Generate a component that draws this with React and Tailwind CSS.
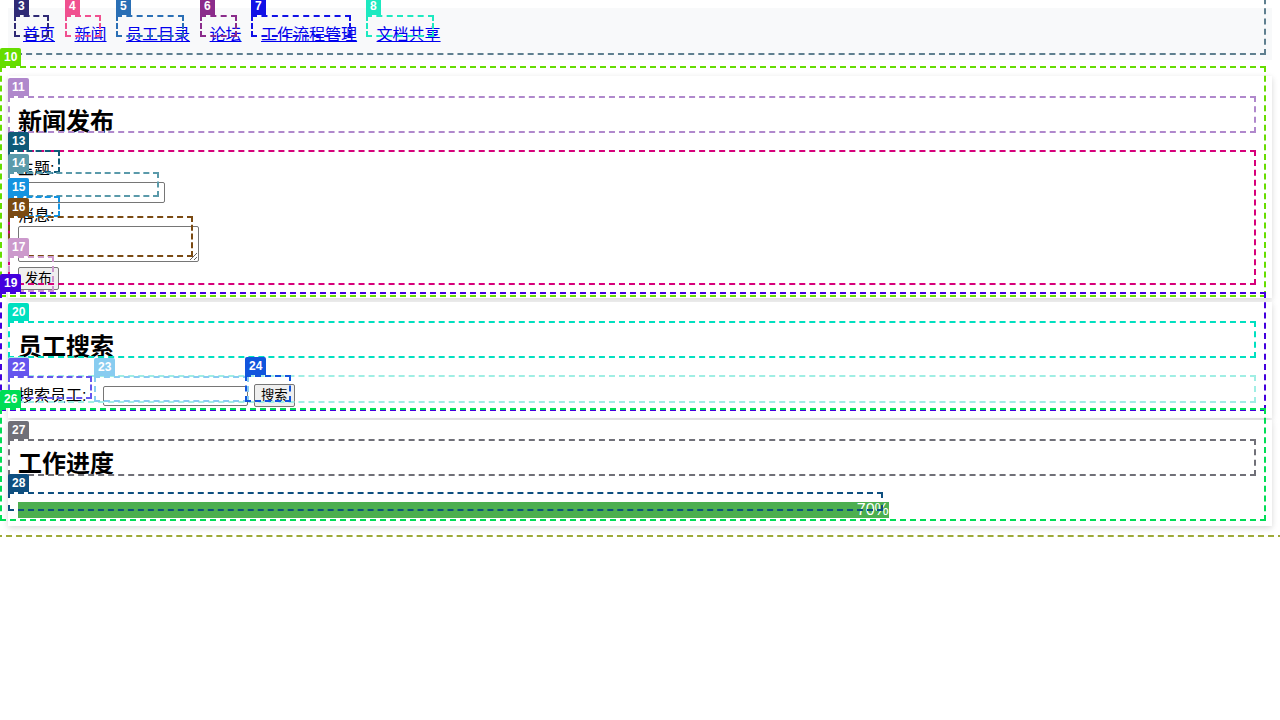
import React from 'react';

// ─── Debug overlay boxes (dashed outlines with numbered tags) ───
const BOXES = [
  { n: '1', box: 'left-[-4px] top-[-4px] w-[1288px] h-[541px] border-[#9eaa38]', tag: null },
  { n: '2', box: 'left-[-4px] top-[-12px] w-[1270px] h-[67px] border-[#5f7f8f]', tag: null },
  { n: '3', box: 'left-[14px] top-[15px] w-[35px] h-[22px] border-[#2f2a75]', tag: 'bg-[#2f2a75]' },
  { n: '4', box: 'left-[65px] top-[15px] w-[36px] h-[22px] border-[#f0508f]', tag: 'bg-[#f0508f]' },
  { n: '5', box: 'left-[116px] top-[15px] w-[68px] h-[22px] border-[#2a6fb5]', tag: 'bg-[#2a6fb5]' },
  { n: '6', box: 'left-[200px] top-[15px] w-[37px] h-[22px] border-[#8b2c8b]', tag: 'bg-[#8b2c8b]' },
  { n: '7', box: 'left-[251px] top-[15px] w-[100px] h-[22px] border-[#1010e6]', tag: 'bg-[#1010e6]' },
  { n: '8', box: 'left-[366px] top-[15px] w-[68px] h-[22px] border-[#1de9c0]', tag: 'bg-[#1de9c0]' },
  { n: '10', box: 'left-[0px] top-[66px] w-[1266px] h-[231px] border-[#66dd00]', tag: 'bg-[#66dd00]' },
  { n: '11', box: 'left-[8px] top-[96px] w-[1248px] h-[37px] border-[#b088cc]', tag: 'bg-[#b088cc]' },
  { n: '12', box: 'left-[8px] top-[150px] w-[1248px] h-[135px] border-[#d6007a]', tag: 'bg-[#d6007a]' },
  { n: '13', box: 'left-[8px] top-[150px] w-[52px] h-[23px] border-[#0e5a78]', tag: 'bg-[#0e5a78]' },
  { n: '14', box: 'left-[8px] top-[172px] w-[151px] h-[25px] border-[#5a9aaa]', tag: 'bg-[#5a9aaa]' },
  { n: '15', box: 'left-[8px] top-[196px] w-[52px] h-[21px] border-[#1493e0]', tag: 'bg-[#1493e0]' },
  { n: '16', box: 'left-[8px] top-[216px] w-[185px] h-[41px] border-[#7a4a12]', tag: 'bg-[#7a4a12]' },
  { n: '17', box: 'left-[8px] top-[256px] w-[46px] h-[36px] border-[#cc99cc]', tag: 'bg-[#cc99cc]' },
  { n: '19', box: 'left-[0px] top-[292px] w-[1266px] h-[119px] border-[#4400dd]', tag: 'bg-[#4400dd]' },
  { n: '20', box: 'left-[8px] top-[321px] w-[1248px] h-[37px] border-[#00e0c0]', tag: 'bg-[#00e0c0]' },
  { n: '21', box: 'left-[8px] top-[375px] w-[1248px] h-[28px] border-[#a0eee4]', tag: 'bg-[#a0eee4]' },
  { n: '22', box: 'left-[8px] top-[376px] w-[84px] h-[23px] border-[#6655ee]', tag: 'bg-[#6655ee]' },
  { n: '23', box: 'left-[94px] top-[376px] w-[155px] h-[26px] border-[#88ccf0]', tag: 'bg-[#88ccf0]' },
  { n: '24', box: 'left-[245px] top-[375px] w-[46px] h-[27px] border-[#1155dd]', tag: 'bg-[#1155dd]' },
  { n: '26', box: 'left-[0px] top-[408px] w-[1266px] h-[113px] border-[#00dd55]', tag: 'bg-[#00dd55]' },
  { n: '27', box: 'left-[8px] top-[439px] w-[1248px] h-[37px] border-[#707078]', tag: 'bg-[#707078]' },
  { n: '28', box: 'left-[8px] top-[492px] w-[875px] h-[19px] border-[#0e4f80]', tag: 'bg-[#0e4f80]' },
];

const NAV = ['首页', '新闻', '员工目录', '论坛', '工作流程管理', '文档共享'];

const Overlay = () => (
  <div className="absolute inset-0 pointer-events-none overflow-hidden">
    {BOXES.map(b => (
      <div key={b.n} className={`absolute border-2 border-dashed ${b.box}`}>
        {b.tag && (
          <span className={`absolute -left-[2px] -top-[20px] px-[4px] h-[18px] leading-[18px] text-[12px] font-bold text-white rounded-t-[2px] ${b.tag}`}>
            {b.n}
          </span>
        )}
      </div>
    ))}
  </div>
);

const inputCls = 'block border border-[#767676] rounded-[2px] bg-white';
const btnCls = 'block border border-[#767676] rounded-[2px] bg-[#efefef] text-[13.33px] px-[6px] text-black';

export default function App() {
  return (
    <div
      className="relative w-[1280px] min-h-[720px] bg-white px-[8px] pt-[8px] text-black text-[16px]"
      style={{ fontFamily: '"Liberation Sans", "Noto Sans CJK SC", sans-serif' }}
    >
      {/* Nav */}
      <nav className="h-[52px] bg-[#f8f9fa] flex items-center pl-[15px] gap-[19.5px]">
        {NAV.map(item => (
          <a key={item} href="#" className="text-[#0000ee] underline leading-[18px] mt-[1px]">{item}</a>
        ))}
      </nav>

      {/* 新闻发布 */}
      <section className="mt-[16px] bg-white shadow-[0_2px_6px_rgba(0,0,0,0.16)] px-[10px] pt-[10px] pb-[8px]">
        <h2 className="mt-[22px] text-[24px] font-bold leading-[28px]">新闻发布</h2>
        <form className="mt-[24px]">
          <label className="block leading-[18px]">主题:</label>
          <input className={`${inputCls} mt-[4px] w-[147px] h-[21px]`} />
          <label className="block mt-[4px] leading-[18px]">消息:</label>
          <textarea className={`${inputCls} mt-[1px] w-[181px] h-[36px]`} />
          <button type="button" className={`${btnCls} mt-[5px] h-[23px]`}>发布</button>
        </form>
      </section>

      {/* 员工搜索 */}
      <section className="mt-[4px] bg-white shadow-[0_2px_6px_rgba(0,0,0,0.16)] px-[10px] pt-[10px] pb-[11px]">
        <h2 className="mt-[21px] text-[24px] font-bold leading-[28px]">员工搜索</h2>
        <div className="mt-[23px] h-[23px] flex items-center">
          <label className="w-[85px] leading-[18px]">搜索员工:</label>
          <input className={`${inputCls} w-[145px] h-[20px]`} />
          <button type="button" className={`${btnCls} ml-[6px] h-[23px]`}>搜索</button>
        </div>
      </section>

      {/* 工作进度 */}
      <section className="mt-[2px] bg-white shadow-[0_2px_6px_rgba(0,0,0,0.16)] px-[10px] pt-[10px] pb-[8px]">
        <h2 className="mt-[20px] text-[24px] font-bold leading-[28px]">工作进度</h2>
        <div className="mt-[24px] w-full">
          <div className="w-[70%] h-[16px] bg-[#4caf50] text-right text-white leading-[16px]">70%</div>
        </div>
      </section>

      <Overlay />
    </div>
  );
}
